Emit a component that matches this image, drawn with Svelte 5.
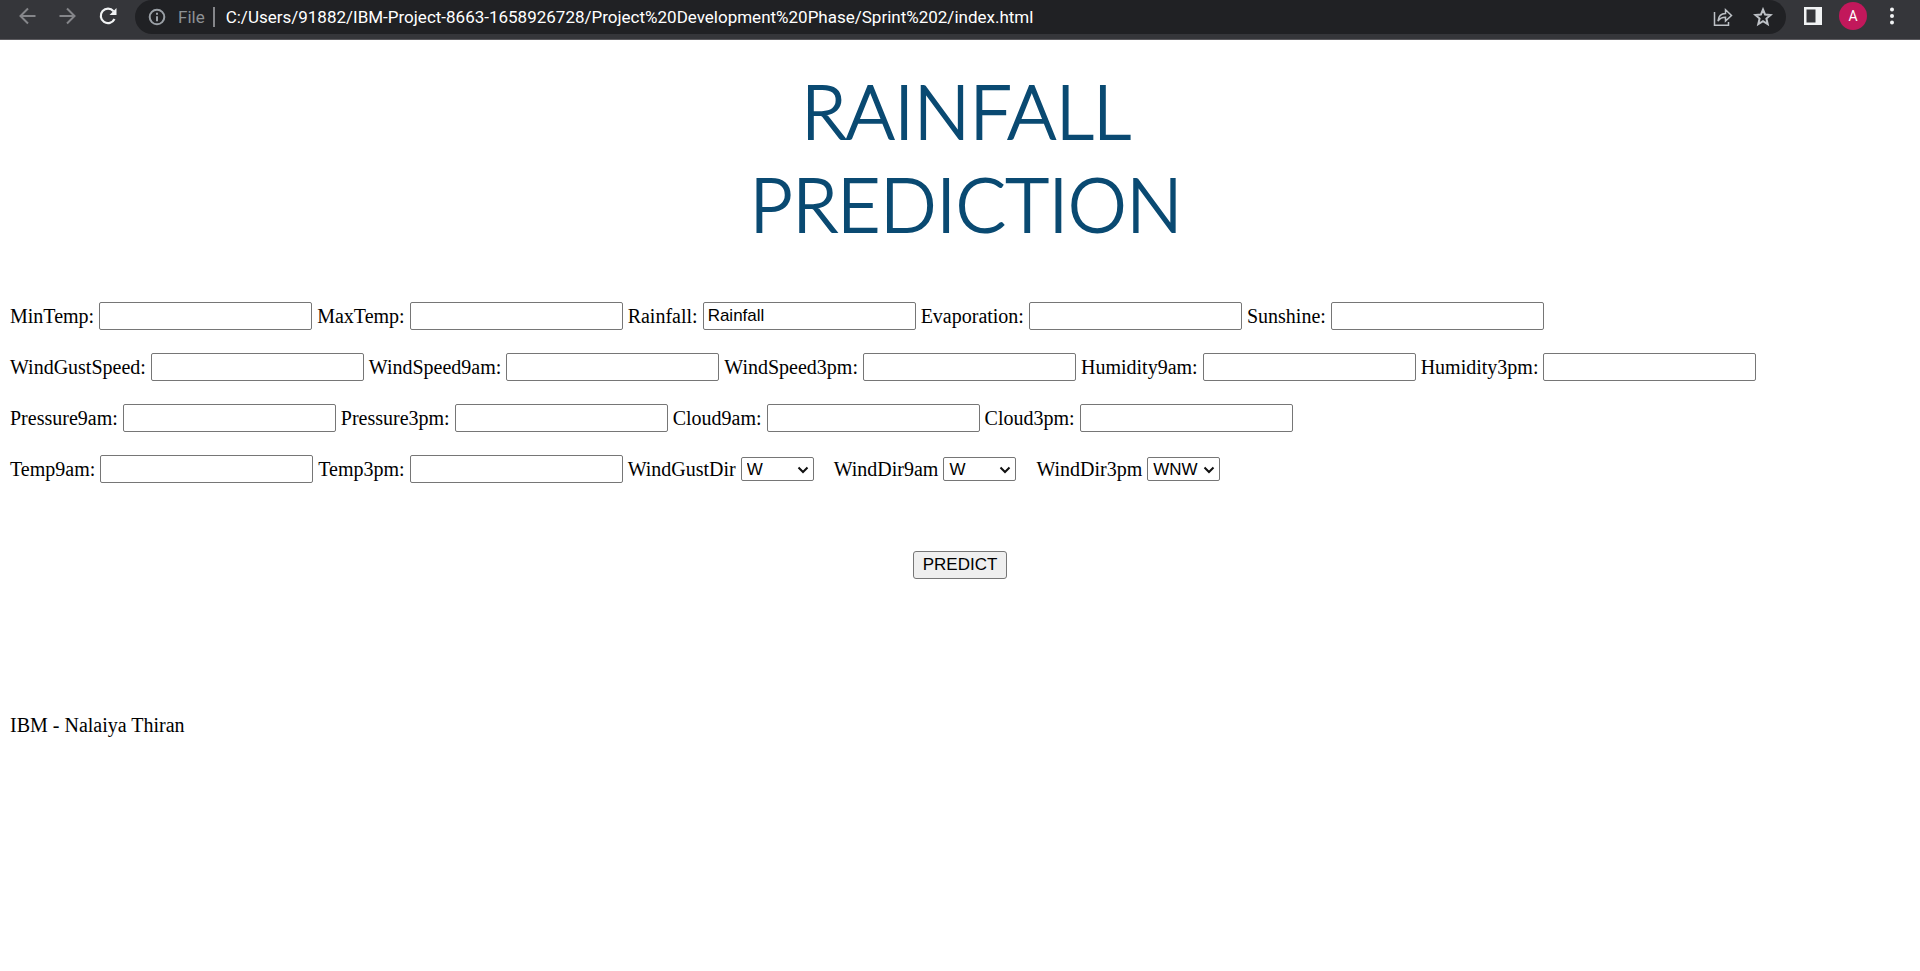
<script>
  const rows = [
    ['MinTemp', 'MaxTemp', 'Rainfall', 'Evaporation', 'Sunshine'],
    ['WindGustSpeed', 'WindSpeed9am', 'WindSpeed3pm', 'Humidity9am', 'Humidity3pm'],
    ['Pressure9am', 'Pressure3pm', 'Cloud9am', 'Cloud3pm'],
    ['Temp9am', 'Temp3pm']
  ];
  const directions = ['W', 'WNW'];
  let values = $state({ Rainfall: 'Rainfall' });
  let winds = $state([
    { name: 'WindGustDir', value: 'W' },
    { name: 'WindDir9am', value: 'W' },
    { name: 'WindDir3pm', value: 'WNW' }
  ]);
  let address = $state('C:/Users/91882/IBM-Project-8663-1658926728/Project%20Development%20Phase/Sprint%202/index.html');
</script>

<header class="toolbar">
  <nav class="nav">
    <button class="icon dim" aria-label="Back">
      <svg width="20" height="20" viewBox="0 0 20 20"><path d="M17.500 10H3M10 2.500 2.500 10l7.500 7.500" /></svg>
    </button>
    <button class="icon dim" aria-label="Forward">
      <svg width="20" height="20" viewBox="0 0 20 20"><path d="M1.500 10h15M9 2.500l7.500 7.500-7.500 7.500" /></svg>
    </button>
    <button class="icon bright" aria-label="Reload">
      <svg width="20" height="20" viewBox="0 0 20 20"><path d="M16.500 13A7.200 7.200 0 1 1 15.500 5.200" stroke-width="2.200" /><path d="M18.500 2v7h-7z" class="solid" /></svg>
    </button>
  </nav>
  <div class="omnibox">
    <button class="icon info" aria-label="View site information">
      <svg width="18" height="18" viewBox="0 0 18 18"><circle cx="9" cy="9" r="7.300" /><path d="M9 8.200v5M9 4.700v2" /></svg>
    </button>
    <label class="scheme" for="address">File</label>
    <input id="address" class="address" type="text" spellcheck="false" bind:value={address} />
    <button class="icon action" aria-label="Share">
      <svg width="20" height="20" viewBox="0 0 20 20"><path d="M1.500 5v13.300h14V15M5 14c.5-5 3-7.500 7.500-7.500V2.800L18.500 8.500l-6 5.500v-3.700c-3.500 0-5.700 1-7.500 3.700z" stroke-width="1.500" /></svg>
    </button>
    <button class="icon action" aria-label="Bookmark this tab">
      <svg width="20" height="20" viewBox="0 0 20 20"><path d="m10 2.500 2.100 5.100 5.500.4-4.200 3.600 1.300 5.400-4.700-2.900L5.300 17l1.300-5.400L2.400 8l5.500-.4z" /></svg>
    </button>
  </div>
  <div class="tools">
    <button class="icon bright" aria-label="Side panel">
      <svg width="18" height="18" viewBox="0 0 18 18"><path class="solid" fill-rule="evenodd" d="M0 0h18v18H0zM2.500 2.500v13h9v-13z" /></svg>
    </button>
    <button class="avatar" aria-label="Profile">A</button>
    <button class="icon bright" aria-label="Menu">
      <svg width="6" height="18" viewBox="0 0 6 18"><g class="solid"><circle cx="3" cy="2.500" r="2" /><circle cx="3" cy="9" r="2" /><circle cx="3" cy="15.500" r="2" /></g></svg>
    </button>
  </div>
</header>

<main>
  <h1>RAINFALL<br />PREDICTION</h1>
  <form onsubmit={(e) => e.preventDefault()}>
    {#each rows as row, i}
      <div class="row">
        {#each row as name}
          <label for={name}>{name}:</label>
          <input id={name} class="field" type="text" bind:value={values[name]} />
        {/each}
        {#if i === rows.length - 1}
          {#each winds as wind}
            <span class="wind">
              <label for={wind.name}>{wind.name}</label>
              <span class="select">
                <select id={wind.name} bind:value={wind.value}>
                  {#each directions as d}<option>{d}</option>{/each}
                </select>
                <svg width="12" height="8" viewBox="0 0 12 8" aria-hidden="true"><path d="m1.500 1.500 4.500 4.500 4.500-4.500" /></svg>
              </span>
            </span>
          {/each}
        {/if}
      </div>
    {/each}
    <button class="predict">PREDICT</button>
  </form>
  <footer>IBM - Nalaiya Thiran</footer>
</main>

<style>
  :global(body) { margin: 0; background: #fff; }

  .toolbar {
    display: flex;
    height: 39px;
    background: #35363a;
    border-bottom: 1px solid #5c5b5f;
    font-family: Roboto, sans-serif;
    font-size: 17px;
  }
  button { cursor: pointer; }
  .icon {
    display: flex;
    padding: 0;
    border: 0;
    background: none;
    color: #9aa0a6;
  }
  .icon svg { fill: none; stroke: currentColor; stroke-width: 2; }
  .icon .solid { fill: currentColor; stroke: none; }
  .dim { color: #85868a; }
  .bright { color: #f1f3f4; }
  .action { color: #bdc1c6; margin-left: 20px; }
  .nav {
    display: flex;
    align-items: center;
    gap: 20px;
    padding: 0 17px 7px 18px;
  }
  .omnibox {
    display: flex;
    flex: 1;
    align-items: center;
    height: 34px;
    box-sizing: border-box;
    padding: 0 13px 1px 13px;
    border-radius: 17px;
    background: #202124;
    min-width: 0;
  }
  .scheme {
    margin-left: 12px;
    padding-right: 8px;
    border-right: 2px solid #85868a;
    line-height: 20px;
    color: #8d9195;
  }
  .address {
    flex: 1;
    min-width: 0;
    margin-left: 11px;
    padding: 0;
    border: 0;
    outline: 0;
    background: none;
    color: #fff;
    font: inherit;
  }
  .tools {
    display: flex;
    align-items: center;
    gap: 17px;
    padding: 0 25px 7px 18px;
  }
  .avatar {
    width: 28px;
    height: 28px;
    margin-right: 5px;
    padding: 0;
    border: 0;
    border-radius: 50%;
    background: #c2185b;
    color: #fff;
    font: 14px Roboto, sans-serif;
  }

  main {
    padding: 0 10px;
    font: 20px/23px "Liberation Serif", serif;
    color: #000;
  }
  h1 {
    margin: 24px 0 52px 12px;
    text-align: center;
    font: 300 74px/93px Lato, sans-serif;
    color: #0a4a72;
    -webkit-text-stroke: 2px #0a4a72;
  }
  .row {
    display: flex;
    align-items: center;
    gap: 5px;
    min-height: 28px;
    margin-bottom: 23px;
  }
  .field {
    box-sizing: border-box;
    width: 213px;
    height: 28px;
    padding: 1px 4px;
    border: 1px solid #767676;
    border-radius: 2px;
    background: #fff;
    font: 17px "Liberation Sans", sans-serif;
  }
  .wind {
    display: flex;
    align-items: center;
    gap: 5px;
    margin-right: 15px;
  }
  .select { position: relative; display: flex; }
  .select svg {
    position: absolute;
    right: 5px;
    top: 9px;
    fill: none;
    stroke: #101010;
    stroke-width: 2;
    pointer-events: none;
  }
  select {
    appearance: none;
    width: 73px;
    height: 24px;
    padding: 0 5px;
    border: 1px solid #767676;
    border-radius: 2px;
    background: #fff;
    color: #000;
    font: 17px "Liberation Sans", sans-serif;
  }
  .predict {
    display: block;
    box-sizing: border-box;
    height: 28px;
    margin: 68px auto 0;
    padding: 0 9px;
    border: 1px solid #767676;
    border-radius: 3px;
    background: #efefef;
    color: #000;
    font: 17px "Liberation Sans", sans-serif;
  }
  footer { margin-top: 135px; }
</style>
